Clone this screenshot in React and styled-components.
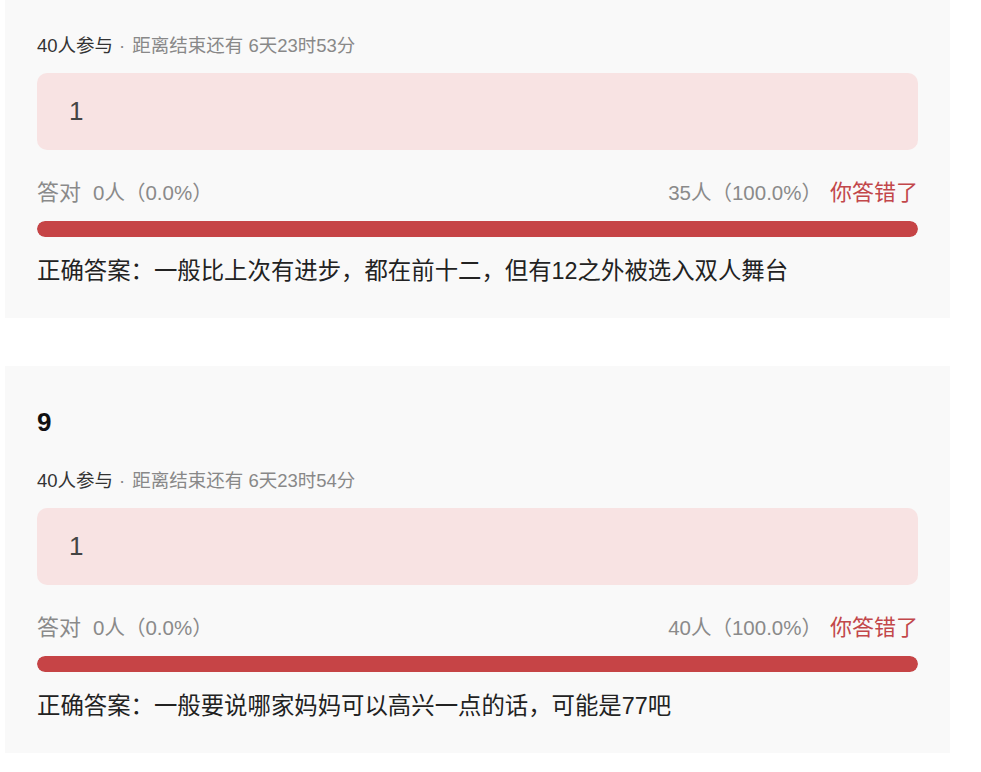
import React from "react";
import styled, { createGlobalStyle } from "styled-components";

const Global = createGlobalStyle`
  html, body { margin: 0; padding: 0; background: #ffffff; }
  body { font-family: "Liberation Sans", "Noto Sans CJK SC", Arial, sans-serif; }
`;

const Page = styled.div`
  display: flex;
  flex-direction: column;
  gap: 48px;
  padding-left: 5px;
  margin-top: -69px;
  width: 945px;
`;

const Card = styled.section`
  background: #f9f9f9;
  padding: 40px 32px 31px;
  display: flex;
  flex-direction: column;
`;

const Title = styled.h2`
  margin: 0;
  font-size: 26px;
  line-height: 32px;
  font-weight: 700;
  color: #111;
`;

const Meta = styled.div`
  margin-top: 31px;
  font-size: 18.5px;
  line-height: 24px;
  color: #888;
`;

const MetaStrong = styled.span`
  color: #333;
`;

const Dot = styled.span`
  margin: 0 7px 0 6px;
`;

const AnswerBox = styled.div`
  margin-top: 15px;
  height: 77px;
  box-sizing: border-box;
  background: #f8e3e3;
  border-radius: 10px;
  padding-left: 32px;
  display: flex;
  align-items: center;
  font-size: 26px;
  color: #444;
`;

const StatsRow = styled.div`
  margin-top: 28px;
  height: 30px;
  display: flex;
  align-items: baseline;
  justify-content: space-between;
`;

const Group = styled.div`
  display: flex;
  align-items: baseline;
  gap: ${(p) => p.$gap}px;
`;

const Label = styled.span`
  font-size: 22px;
  line-height: 30px;
  color: ${(p) => (p.$wrong ? "#c2474a" : "#8a8a8a")};
`;

const Count = styled.span`
  font-size: 20.5px;
  line-height: 30px;
  color: #8a8a8a;
`;

const Bar = styled.div`
  margin-top: 13px;
  height: 16px;
  border-radius: 8px;
  background: #ebebeb;
  overflow: hidden;
  display: flex;
`;

const BarFill = styled.div`
  height: 100%;
  background: #c64446;
  border-radius: 8px;
`;

const Correct = styled.div`
  margin-top: 18px;
  font-size: 23.4px;
  line-height: 32px;
  color: #222;
`;

const items = [
  {
    no: "8",
    time: "6天23时53分",
    answer: "1",
    right: "0人（0.0%）",
    wrong: "35人（100.0%）",
    pct: 100,
    correct: "一般比上次有进步，都在前十二，但有12之外被选入双人舞台",
  },
  {
    no: "9",
    time: "6天23时54分",
    answer: "1",
    right: "0人（0.0%）",
    wrong: "40人（100.0%）",
    pct: 100,
    correct: "一般要说哪家妈妈可以高兴一点的话，可能是77吧",
  },
];

export default function App() {
  return (
    <>
      <Global />
      <Page>
        {items.map((it) => (
          <Card key={it.no}>
            <Title>{it.no}</Title>
            <Meta>
              <MetaStrong>40人参与</MetaStrong>
              <Dot>·</Dot>距离结束还有 {it.time}
            </Meta>
            <AnswerBox>{it.answer}</AnswerBox>
            <StatsRow>
              <Group $gap={12}>
                <Label>答对</Label>
                <Count>{it.right}</Count>
              </Group>
              <Group $gap={8}>
                <Count>{it.wrong}</Count>
                <Label $wrong>你答错了</Label>
              </Group>
            </StatsRow>
            <Bar>
              <BarFill style={{ width: `${it.pct}%` }} />
            </Bar>
            <Correct>正确答案：{it.correct}</Correct>
          </Card>
        ))}
      </Page>
    </>
  );
}
